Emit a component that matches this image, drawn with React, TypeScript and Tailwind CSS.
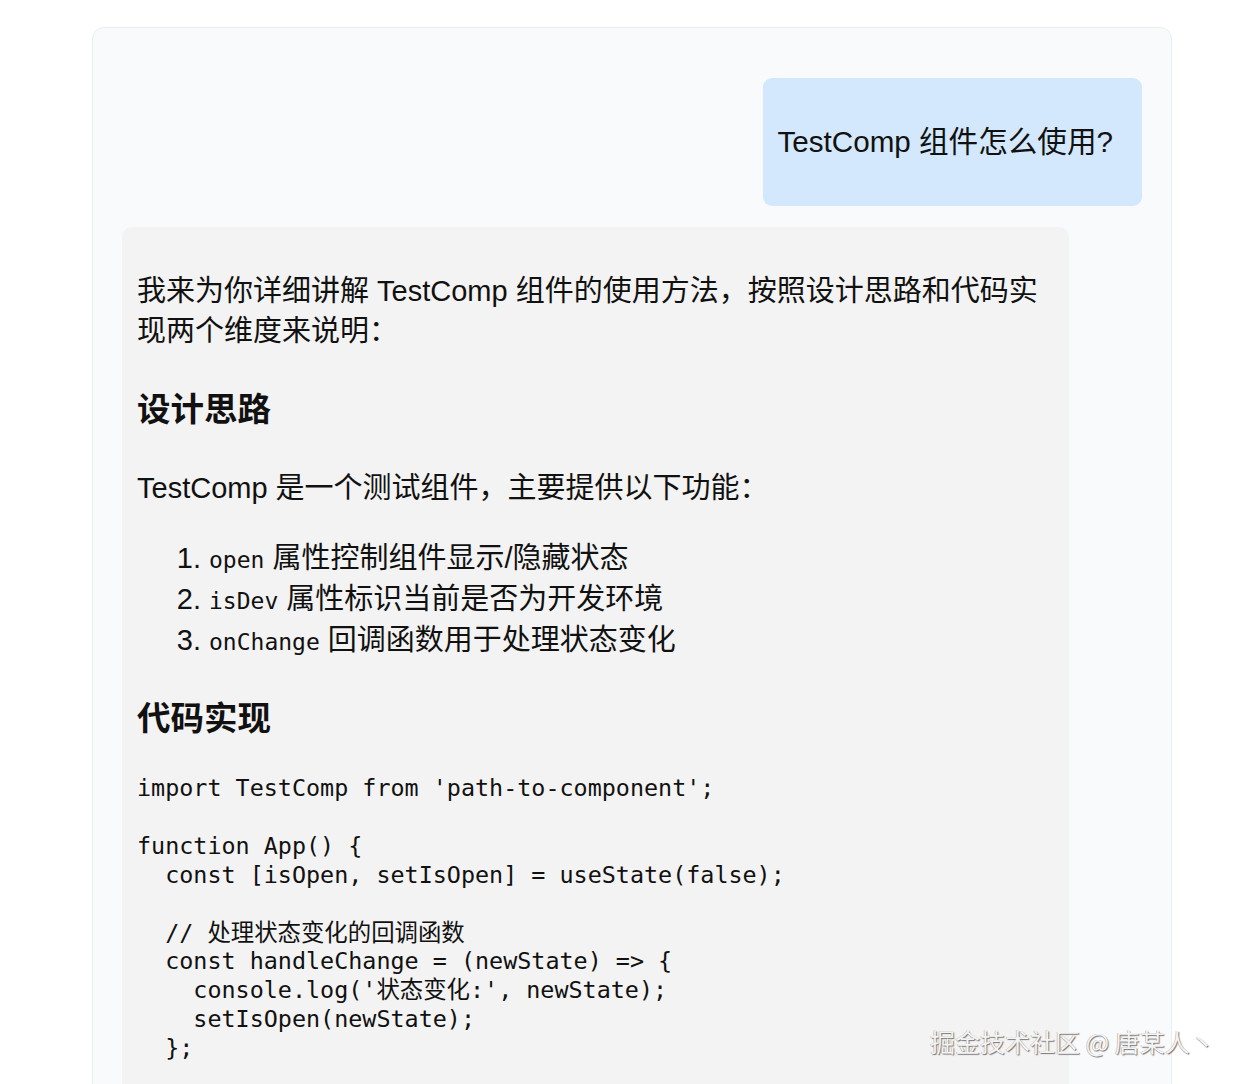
import React from "react";

const sans = { fontFamily: '"Liberation Sans", "Noto Sans CJK SC", sans-serif' };
const mono = { fontFamily: '"DejaVu Sans Mono", "Noto Sans CJK SC", monospace' };

function Code({ children }: { children: React.ReactNode }) {
  return (
    <code className="text-[23px] leading-[20px]" style={mono}>
      {children}
    </code>
  );
}

const codeText = `import TestComp from 'path-to-component';

function App() {
  const [isOpen, setIsOpen] = useState(false);

  // 处理状态变化的回调函数
  const handleChange = (newState) => {
    console.log('状态变化:', newState);
    setIsOpen(newState);
  };`;

export default function App() {
  return (
    <div className="relative w-[1244px] h-[1084px] overflow-hidden bg-white text-[#111]" style={sans}>
      <div className="ml-[92px] mt-[27px] w-[1080px] h-[1100px] rounded-[12px] border border-[#ebedf0] bg-[#f9fafc] pt-[50px] px-[29px]">
        <div className="flex justify-end">
          <div className="rounded-[9px] bg-[#d3e8fc] pl-[15px] pr-[29px] py-[15px]">
            <p className="my-[29px] text-[29.6px] leading-[40px]">TestComp 组件怎么使用?</p>
          </div>
        </div>
        <div className="mt-[21px] w-[947px] rounded-[10px] bg-[#f3f3f3] px-[15px] py-[15px] h-[1000px]">
          <p className="mt-[29px] text-[29px] leading-[40px]">
            我来为你详细讲解 TestComp 组件的使用方法，按照设计思路和代码实现两个维度来说明：
          </p>
          <h3 className="mt-[35px] text-[33.5px] leading-[48px] font-bold">设计思路</h3>
          <p className="mt-[34px] text-[29px] leading-[40px]">TestComp 是一个测试组件，主要提供以下功能：</p>
          <ol className="mt-[30px] list-decimal pl-[72px] text-[29px] leading-[41px]">
            <li>
              <Code>open</Code> 属性控制组件显示/隐藏状态
            </li>
            <li>
              <Code>isDev</Code> 属性标识当前是否为开发环境
            </li>
            <li>
              <Code>onChange</Code> 回调函数用于处理状态变化
            </li>
          </ol>
          <h3 className="mt-[34px] text-[33.5px] leading-[48px] font-bold">代码实现</h3>
          <pre className="mt-[31px] text-[23.4px] leading-[28.9px] whitespace-pre" style={mono}>
            {codeText}
          </pre>
        </div>
      </div>
      <div
        className="absolute left-[930px] top-[1024px] text-[25px] leading-[34px] text-[#f4f4f4]"
        style={{
          fontFamily: '"Noto Sans CJK SC", sans-serif',
          textShadow: "1px 1px 1px #777, -0.5px -0.5px 0.5px #aaa",
        }}
      >
        掘金技术社区 @ 唐某人丶
      </div>
    </div>
  );
}
